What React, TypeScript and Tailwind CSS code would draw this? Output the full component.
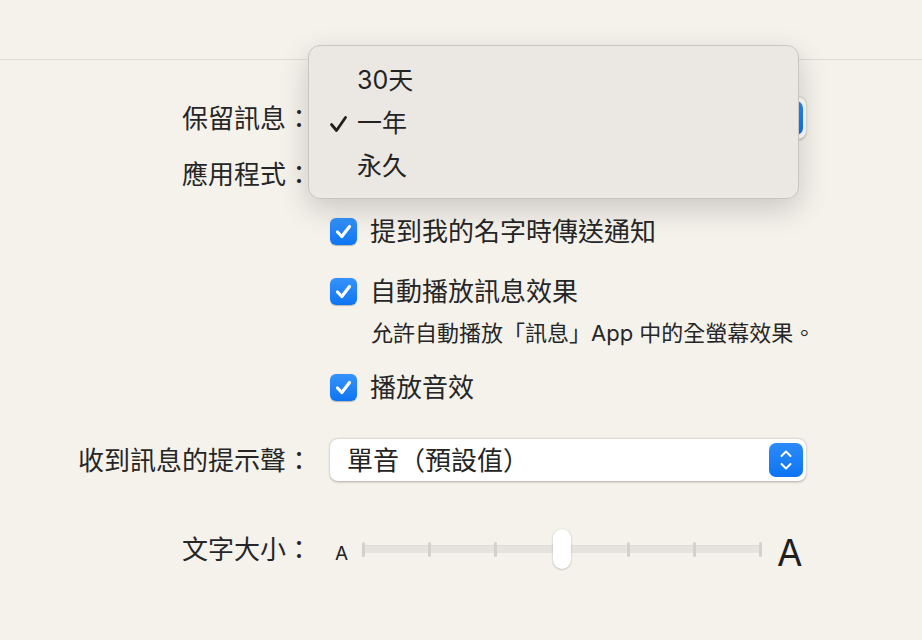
import React from "react";

const font = "font-['Inter','Noto_Sans_CJK_TC',sans-serif]";

const Checkbox = () => (
  <div className="w-[27px] h-[27px] rounded-[6px] bg-gradient-to-b from-[#3593fa] to-[#0b74f2] flex items-center justify-center shadow-[0_0.5px_1px_rgba(0,0,0,0.25)]">
    <svg width="19" height="19" viewBox="0 0 19 19" fill="none">
      <path d="M3.5 10 L7.8 14.5 L15.5 4.5" stroke="white" strokeWidth="3.2" strokeLinecap="round" strokeLinejoin="round" />
    </svg>
  </div>
);

const Stepper = () => (
  <div className="w-[34px] h-[34px] rounded-[7px] bg-gradient-to-b from-[#2b8bfa] to-[#0a74f3] flex flex-col items-center justify-center gap-[4px]">
    <svg width="14" height="9" viewBox="0 0 14 9" fill="none">
      <path d="M2.5 7 L7 2.5 L11.5 7" stroke="white" strokeWidth="2" strokeLinecap="round" strokeLinejoin="round" />
    </svg>
    <svg width="14" height="9" viewBox="0 0 14 9" fill="none">
      <path d="M2.5 2 L7 6.5 L11.5 2" stroke="white" strokeWidth="2" strokeLinecap="round" strokeLinejoin="round" />
    </svg>
  </div>
);

const PopupButton = ({ value }: { value: string }) => (
  <div className="w-[476px] h-[42px] bg-white rounded-[8px] shadow-[0_0.5px_2.5px_rgba(0,0,0,0.3)] flex items-center justify-between pl-[17px] pr-[3px]">
    <span className="text-[26px] text-[#232323]">{value}</span>
    <Stepper />
  </div>
);

const Row = ({ label, children, className = "" }: { label?: string; children: React.ReactNode; className?: string }) => (
  <div className={`flex items-center ${className}`}>
    <div className="w-[312px] text-right text-[26px] text-[#262626]">{label}</div>
    <div className="ml-[18px] flex items-center">{children}</div>
  </div>
);

export default function App() {
  const ticks = [0, 1, 2, 3, 4, 5, 6];
  return (
    <div className={`relative w-[922px] h-[640px] bg-[#f5f2ec] overflow-hidden ${font}`}>
      {/* toolbar */}
      <div className="h-[60px] border-b border-[#dedbd5]" />

      {/* settings */}
      <div className="flex flex-col">
        <Row label="保留訊息：" className="mt-[40px] h-[36px]">
          <PopupButton value="" />
        </Row>
        <Row label="應用程式：" className="mt-[20px] h-[36px]">
          <span />
        </Row>
        <Row className="mt-[21px] h-[36px]">
          <Checkbox />
          <span className="ml-[13px] text-[26px] text-[#262626]">提到我的名字時傳送通知</span>
        </Row>
        <Row className="mt-[24px] h-[36px]">
          <Checkbox />
          <span className="ml-[13px] text-[26px] text-[#262626]">自動播放訊息效果</span>
        </Row>
        <div className="ml-[371px] mt-[10px] h-[28px] flex items-center text-[22px] text-[#262626]">
          允許自動播放「訊息」App 中的全螢幕效果。
        </div>
        <Row className="mt-[22px] h-[36px]">
          <Checkbox />
          <span className="ml-[13px] text-[26px] text-[#262626]">播放音效</span>
        </Row>
        <Row label="收到訊息的提示聲：" className="mt-[34px] h-[42px]">
          <PopupButton value="單音（預設值）" />
        </Row>
        <Row label="文字大小：" className="mt-[48px] h-[40px]">
          <div className="w-[476px] flex items-center">
            <span className="text-[19px] text-[#232323] mt-[10px] w-[32px] pl-[5px]">A</span>
            <div className="relative w-[400px] h-[40px] flex items-center">
              <div className="absolute left-0 right-0 h-[8px] rounded-full bg-[#e6e3de] shadow-[inset_0_0.5px_1px_rgba(0,0,0,0.06)]" />
              <div className="relative w-full flex justify-between items-center">
                {ticks.map((t) => (
                  <div key={t} className="w-[3px] h-[15px] rounded-full bg-[#d4d1cc]" />
                ))}
              </div>
              <div className="absolute left-[191px] top-0 w-[18px] h-[40px] rounded-full bg-white shadow-[0_0.5px_2px_rgba(0,0,0,0.3)]" />
            </div>
            <span className="ml-[15px] text-[37px] leading-none text-[#1f1f1f] mt-[6px]">A</span>
          </div>
        </Row>
      </div>

      {/* popup menu */}
      <div className="absolute left-[308px] top-[45px] w-[491px] h-[154px] rounded-[12px] bg-[#ebe8e3] border border-[#c9c6c1] shadow-[0_10px_30px_rgba(0,0,0,0.18)] py-[13px]">
        {["30天", "一年", "永久"].map((item, i) => (
          <div key={item} className="h-[43px] flex items-center">
            <div className="w-[48px] flex justify-end pr-[9px]">
              {i === 1 && (
                <svg width="19" height="18" viewBox="0 0 19 18" fill="none">
                  <path d="M2.5 9.5 L7.5 15.5 L16.5 2.5" stroke="#1f1f1f" strokeWidth="2.8" strokeLinecap="round" strokeLinejoin="round" />
                </svg>
              )}
            </div>
            <span className="text-[25px] text-[#232323]">{item}</span>
          </div>
        ))}
      </div>
    </div>
  );
}
